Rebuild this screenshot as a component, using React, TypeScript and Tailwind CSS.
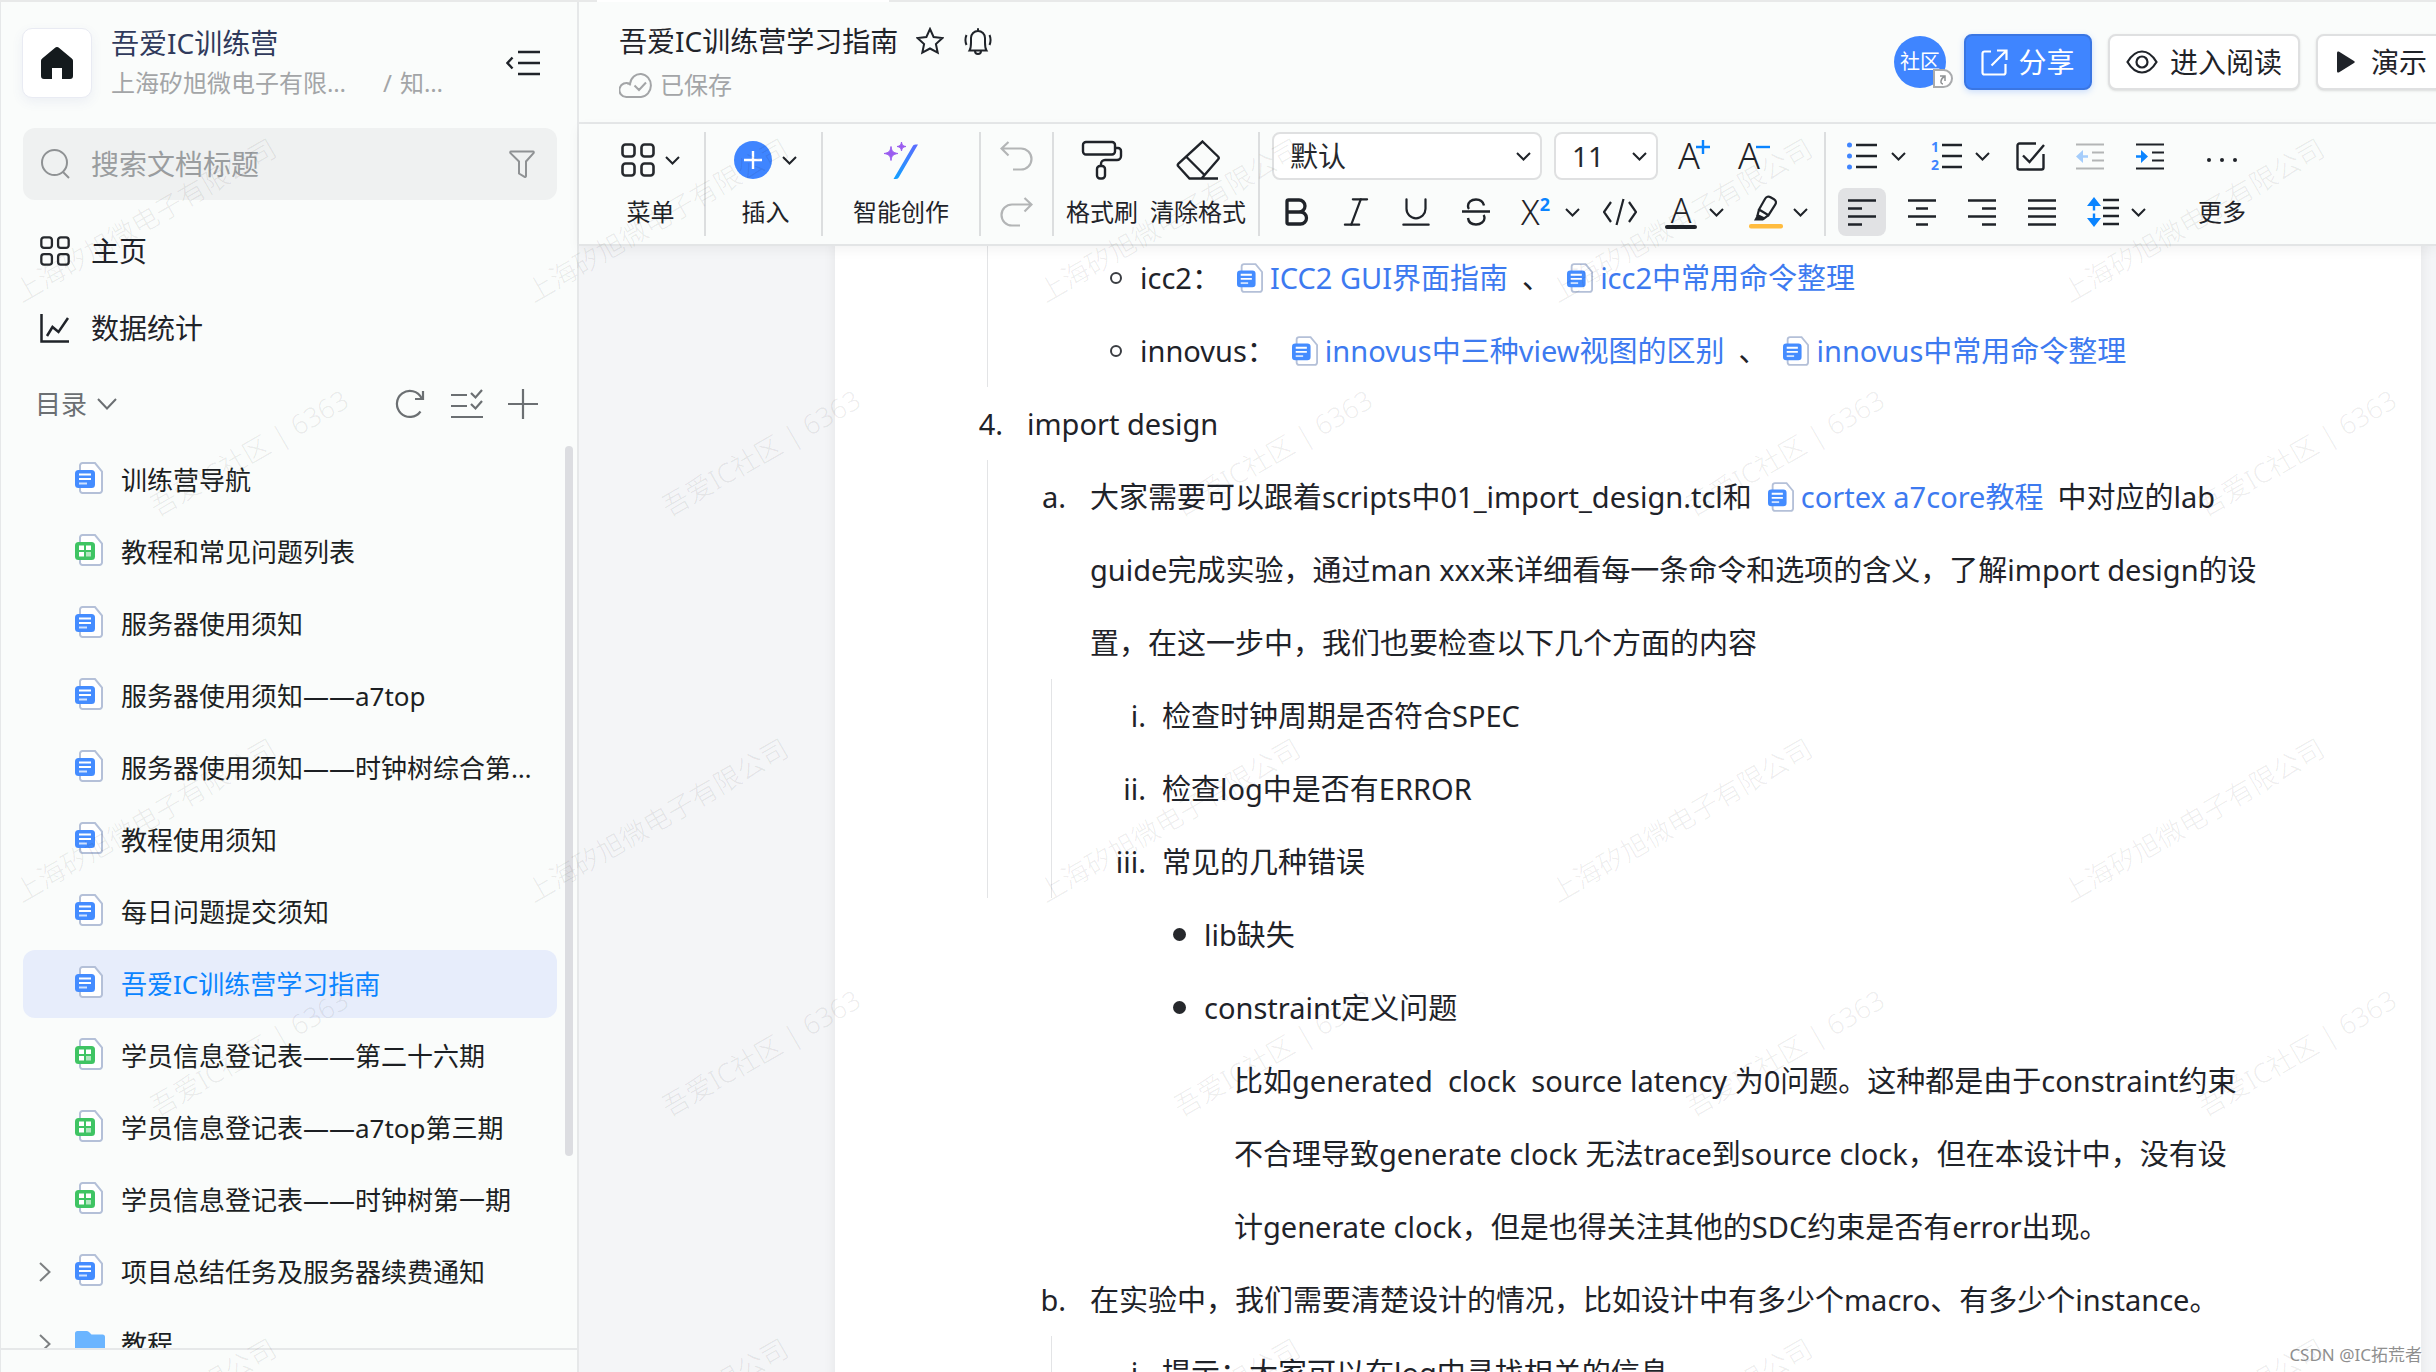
import type { ReactNode } from 'react';
import { Bold, Italic, Underline } from 'lucide-react';
import clsx from 'clsx';

type DocKind = 'doc' | 'sheet' | 'folder';

const tree: { title: string; kind: DocKind; active?: boolean; expandable?: boolean }[] = [
  { title: '训练营导航', kind: 'doc' },
  { title: '教程和常见问题列表', kind: 'sheet' },
  { title: '服务器使用须知', kind: 'doc' },
  { title: '服务器使用须知——a7top', kind: 'doc' },
  { title: '服务器使用须知——时钟树综合第二期', kind: 'doc' },
  { title: '教程使用须知', kind: 'doc' },
  { title: '每日问题提交须知', kind: 'doc' },
  { title: '吾爱IC训练营学习指南', kind: 'doc', active: true },
  { title: '学员信息登记表——第二十六期', kind: 'sheet' },
  { title: '学员信息登记表——a7top第三期', kind: 'sheet' },
  { title: '学员信息登记表——时钟树第一期', kind: 'sheet' },
  { title: '项目总结任务及服务器续费通知', kind: 'doc', expandable: true },
  { title: '教程', kind: 'folder', expandable: true },
];

export default function App() {
  return (
    <div
      lang="zh-CN"
      className="relative flex h-screen flex-col overflow-hidden bg-[#fafcfb] font-['Noto_Sans','Noto_Sans_CJK_SC',sans-serif] text-[#1f2329]"
    >
      <div className="h-0.5 flex-none bg-[#e8e9e9] pl-[597px]">
        <div className="h-full w-[292px] bg-white" />
      </div>
      <div className="flex min-h-0 flex-1">
        <Sidebar />
        <div className="flex min-w-0 flex-1 flex-col">
          <TopBar />
          <Toolbar />
          <Editor />
        </div>
      </div>
      <Watermark />
      <span className="absolute right-[14px] bottom-[5px] text-[17px] text-[#8f8f8f] [text-shadow:1px_1px_0_#fff]">
        CSDN @IC拓荒者
      </span>
    </div>
  );
}

function Sidebar() {
  return (
    <aside className="flex w-[579px] flex-none flex-col border-r-2 border-l border-[#e6e8e9]">
      <div className="flex items-center pt-[21px] pr-[37px] pl-[21px]">
        <button
          aria-label="首页"
          className="flex h-[70px] w-[70px] flex-none items-center justify-center rounded-[10px] border border-[#e9ebf3] bg-white shadow-[0_4px_12px_rgba(80,90,160,0.08)]"
        >
          <svg width="32" height="32" viewBox="0 0 32 32" fill="#141a1d">
            <path d="M14.4.6a2.6 2.6 0 0 1 3.2 0L30.800 11.500A3 3 0 0 1 32 14v15a3 3 0 0 1-3 3h-8V21H11v11H3a3 3 0 0 1-3-3V14a3 3 0 0 1 1.200-2.500z" />
          </svg>
        </button>
        <div className="ml-[19px] min-w-0 flex-1">
          <div className="text-[28px] leading-10 text-[#303a5c]">吾爱IC训练营</div>
          <div className="flex text-[24px] leading-10 text-[#a3a5a7]">
            <span className="w-[246px] truncate">上海矽旭微电子有限公司</span>
            <span className="ml-[26px]">/</span>
            <span className="ml-2 whitespace-nowrap">知…</span>
          </div>
        </div>
        <button aria-label="收起目录">
          <Svg w={34} h={26} s={2.4} className="text-[#1f2329]">
            <path d="M12 2h22M12 13h22M12 24h22M6.500 7.500 1.500 13l5 5.500" />
          </Svg>
        </button>
      </div>

      <label className="mr-5 ml-[22px] mt-[25px] flex h-[72px] flex-none items-center rounded-xl bg-[#eff1f1] pr-[22px] pl-[18px] text-[#8f9294]">
        <Svg w={30} h={30} s={2}>
          <circle cx="13.500" cy="13.500" r="12.500" />
          <path d="m22 23 6 6" />
        </Svg>
        <input
          type="text"
          aria-label="搜索文档标题"
          placeholder="搜索文档标题"
          className="ml-5 min-w-0 flex-1 bg-transparent text-[28px] outline-none placeholder:text-[#9a9d9f]"
        />
        <Svg w={26} h={28} s={2}>
          <path d="M2 1.500h22c.8 0 1 1 .5 1.600L17 11.500V26c0 .8-.8 1.200-1.400.8L10 23.500v-12L1.500 3.100C1 2.500 1.200 1.500 2 1.500z" />
        </Svg>
      </label>

      <nav className="mt-3 text-[28px]">
        <a href="#home" className="flex h-[77px] items-center pl-[39px]">
          <GridIcon size={30} />
          <span className="ml-[21px]">主页</span>
        </a>
        <a href="#stats" className="flex h-[77px] items-center pl-[39px]">
          <Svg w={30} h={30} s={2.5}>
            <path d="M1.500 1v27.500H29M7 23l5.500-9 6 5L28 5" />
          </Svg>
          <span className="ml-[21px]">数据统计</span>
        </a>
      </nav>

      <div className="mb-1 flex h-[76px] flex-none items-center pr-[39px] pl-[34px] text-[#6b6f72]">
        <button className="flex items-center gap-[10px] text-[26px]">
          目录
          <Svg w={20} h={12} s={2}>
            <path d="m1 1 9 9.500L19 1" />
          </Svg>
        </button>
        <button aria-label="刷新" className="ml-auto">
          <Svg w={30} h={30} s={2.2}>
            <path d="M25.500 22.500A13 13 0 1 1 26.500 9M28 2v8h-8" />
          </Svg>
        </button>
        <button aria-label="批量选择" className="ml-[26px]">
          <Svg w={32} h={30} s={2.2}>
            <path d="M0 6h16M0 17h16M0 28h32M20 4l4.500 4.500L31 1M20 15l4.500 4.500L31 12" />
          </Svg>
        </button>
        <button aria-label="新建" className="ml-[25px]">
          <Svg w={30} h={30} s={2.2}>
            <path d="M15 0v30M0 15h30" />
          </Svg>
        </button>
      </div>

      <div className="flex min-h-0 flex-1 justify-between border-b-2 border-[#e6e8e9] pr-1 pl-[22px]">
        <ul className="h-full w-[534px] overflow-hidden">
          {tree.map((item) => (
            <li key={item.title} className="mb-1">
              <a
                href="#doc"
                className={clsx(
                  'flex h-[68px] items-center rounded-xl pr-3 pl-4 text-[26px]',
                  item.active ? 'bg-[#e7edfb] text-[#0a84ff]' : 'text-[#1c1f23]',
                )}
              >
                <span className="w-9 flex-none text-[#7d8082]">
                  {item.expandable && (
                    <Svg w={12} h={20} s={2}>
                      <path d="m1 1 9.500 9L1 19" />
                    </Svg>
                  )}
                </span>
                {item.kind === 'folder' ? <FolderIcon /> : <DocIcon kind={item.kind} className="mb-1 h-8 w-7 flex-none" />}
                <span className="ml-[18px] truncate">{item.title}</span>
              </a>
            </li>
          ))}
        </ul>
        <div className="h-[710px] w-2 flex-none rounded-full bg-[#dcdde1]" />
      </div>
      <div className="h-[22px] flex-none" />
    </aside>
  );
}

function TopBar() {
  return (
    <header className="flex h-[122px] flex-none items-center overflow-hidden border-b-2 border-[#e6e8e9] pl-10 whitespace-nowrap">
      <div className="self-start pt-[17px]">
        <div className="flex items-center text-[28px] leading-[44px]">
          <h1>吾爱IC训练营学习指南</h1>
          <button aria-label="收藏" className="ml-[18px]">
            <Svg w={28} h={28} s={2}>
              <path d="m14 2 3.600 8 8.900 1-6.600 6 1.800 8.700L14 21.500l-7.700 4.200L8.100 17l-6.600-6 8.900-1z" />
            </Svg>
          </button>
          <button aria-label="订阅" className="ml-5">
            <Svg w={28} h={28} s={2}>
              <path d="M14 1.200v2M5.500 23.500c1.500-2.500 1.500-4 1.500-8V11a7 7 0 0 1 14 0v4.500c0 4 0 5.500 1.500 8zM11 24c0 4 6 4 6 0M2.500 8c-1.500 3.500-1.500 6.500 0 10M25.500 8c1.500 3.500 1.500 6.500 0 10" />
            </Svg>
          </button>
        </div>
        <div className="flex items-center gap-2 text-[24px] leading-[44px] text-[#a3a5a7]">
          <Svg w={33} h={26} s={2}>
            <path d="M7.500 25H22a10.500 11.500 0 1 0-11-13A7 7 0 1 0 7.500 25zM15.500 13.500l4.500 4.500 7-7.500M8 11.500c2 0 3 .5 3.500 1.500" />
          </Svg>
          已保存
        </div>
      </div>

      <div className="-mr-4 ml-auto flex items-center text-[28px]">
        <div className="relative mr-[18px] flex h-[52px] w-[52px] items-center justify-center rounded-full bg-[#3f85ff] text-[20px] text-white">
          社区
          <span className="absolute -right-[7px] bottom-0 flex h-[19px] w-[20px] items-center justify-center rounded-r-full border-2 border-[#a9abad] bg-white">
            <svg width="10" height="12" viewBox="0 0 10 12" fill="none" stroke="#8f9294" strokeWidth="1.5">
              <path d="M2 3h5v5M7 3C2 6 2 11 5 11" />
            </svg>
          </span>
        </div>
        <button className="flex h-14 w-32 items-center justify-center gap-[10px] rounded-lg border-2 border-[#3a76e3] bg-[#3f85ff] text-white shadow-[0_2px_6px_rgba(63,133,255,0.25)]">
          <Svg w={27} h={27} s={2.2}>
            <path d="M10 2.500H3.500a2 2 0 0 0-2 2v19a2 2 0 0 0 2 2h19a2 2 0 0 0 2-2V15M10.500 16.500 25.500 1.500M16 1.500h9.500V11" />
          </Svg>
          分享
        </button>
        <button className="ml-4 flex h-14 w-48 items-center justify-center gap-3 rounded-lg border-2 border-[#dfe0e1] bg-white shadow-sm">
          <Svg w={32} h={24} s={2.2}>
            <path d="M1.500 12C6 4.500 11 1.500 16 1.500S26 4.500 30.500 12C26 19.500 21 22.500 16 22.500S6 19.500 1.500 12z" />
            <circle cx="16" cy="12" r="5.500" />
          </Svg>
          进入阅读
        </button>
        <button className="ml-4 flex h-14 w-[136px] items-center gap-4 rounded-lg border-2 border-[#dfe0e1] bg-white pl-[19px] shadow-sm">
          <svg width="18" height="22" viewBox="0 0 18 22" fill="#1f2329">
            <path d="M0 2C0 .5 1 0 2.200.8L17 10c1 .6 1 1.400 0 2L2.200 21.200C1 22 0 21.500 0 20z" />
          </svg>
          演示
        </button>
      </div>
    </header>
  );
}

function Toolbar() {
  return (
    <div
      role="toolbar"
      className="relative z-10 flex h-[122px] flex-none items-center overflow-hidden border-b-2 border-[#e3e5e6] bg-[#fafcfb] text-[24px] leading-8 whitespace-nowrap shadow-[0_4px_12px_rgba(0,0,0,0.05)]"
    >
      <BigButton className="ml-[42px]" label="菜单">
        <GridIcon size={34} />
        <Chevron />
      </BigButton>
      <Divider className="ml-6" />
      <BigButton className="ml-7" label="插入">
        <svg width="38" height="38" viewBox="0 0 38 38">
          <circle cx="19" cy="19" r="19" fill="#3f85ff" />
          <path d="M19 10v18M10 19h18" stroke="#fff" strokeWidth="2.400" />
        </svg>
        <Chevron />
      </BigButton>
      <Divider className="ml-6" />
      <BigButton className="ml-[30px]" label="智能创作">
        <svg width="34" height="38" viewBox="0 0 34 38">
          <defs>
            <linearGradient id="wand" x1="0" y1="0" x2="0" y2="1">
              <stop offset="0" stopColor="#5b6cff" />
              <stop offset="1" stopColor="#12a0ff" />
            </linearGradient>
          </defs>
          <path d="M28.500 5.500c.5-1.200 1.500-2 3-2H34L15 36c-.6 1.200-1.500 2-3 2h-2.500z" fill="url(#wand)" />
          <path d="M7 5.500c.8 5 2 6.200 7 7-5 .8-6.200 2-7 7-.8-5-2-6.200-7-7 5-.8 6.200-2 7-7z" fill="#9a5cf0" stroke="#9a5cf0" />
          <path d="M17.500 1c.5 3.300 1.300 4.100 4.500 4.500-3.200.5-4 1.300-4.500 4.500-.5-3.200-1.300-4-4.500-4.500 3.200-.4 4-1.200 4.500-4.500z" fill="#9a5cf0" stroke="#9a5cf0" />
        </svg>
      </BigButton>
      <Divider className="ml-[30px]" />
      <div className="mx-[19px] flex flex-col gap-[26px] text-[#b3b5b6]">
        <button aria-label="撤销">
          <Svg w={33} h={30} s={2.2}>
            <path d="M8.500 1 1.500 7.500l7 7M1.500 7.500H21a10.500 10.500 0 0 1 0 21h-8" />
          </Svg>
        </button>
        <button aria-label="重做">
          <Svg w={33} h={30} s={2.2}>
            <path d="m24.500 1 7 6.500-7 7M31.500 7.500H12a10.500 10.500 0 0 0 0 21h8" />
          </Svg>
        </button>
      </div>
      <Divider />
      <BigButton className="ml-3" label="格式刷">
        <Svg w={42} h={40} s={2.4}>
          <rect x="2" y="2" width="32" height="12.500" rx="3" />
          <path d="M34 8h3a3 3 0 0 1 3 3v5a4 4 0 0 1-4 4H24a4 4 0 0 0-4 4v2" />
          <rect x="16" y="26" width="8" height="12.500" rx="3" />
        </Svg>
      </BigButton>
      <BigButton className="ml-3" label="清除格式">
        <Svg w={44} h={40} s={2.4}>
          <path d="M26.500 1.500 42 16.500c1 1 1 2 0 3L25.500 38.500H13.500l-11-12c-1-1-1-2 0-3zM10.500 17 28 34.500M14 38.500h28" />
        </Svg>
      </BigButton>
      <Divider className="ml-3" />

      <div className="ml-3 flex flex-col gap-2">
        <div className="flex gap-3">
          <Select label="字体" value="默认" className="w-[270px]" />
          <Select label="字号" value="11" className="w-[104px]" />
          <Tool label="增大字号">
            <span className="text-[36px] leading-10 font-light">A</span>
            <Svg w={14} h={14} s={2.4} className="mt-2 -ml-1 self-start text-[#0a84ff]">
              <path d="M7 0v14M0 7h14" />
            </Svg>
          </Tool>
          <Tool label="减小字号">
            <span className="text-[36px] leading-10 font-light">A</span>
            <Svg w={14} h={14} s={2.4} className="mt-2 -ml-1 self-start text-[#0a84ff]">
              <path d="M0 7h14" />
            </Svg>
          </Tool>
        </div>
        <div className="flex gap-3">
          <Tool label="加粗"><Bold size={36} strokeWidth={2.2} /></Tool>
          <Tool label="斜体"><Italic size={38} strokeWidth={1.4} /></Tool>
          <Tool label="下划线"><Underline size={38} strokeWidth={1.4} /></Tool>
          <Tool label="删除线">
            <Svg w={28} h={28} s={2.4}>
              <path d="M0 13.500h28M22 7.500C21 3.500 18 1.500 14 1.500c-5 0-8 3-8 6.500 0 1.200.4 2.300 1 3M6 20c.5 4 3.500 6.500 8 6.500 5 0 8.500-3 8.500-6.500 0-1.200-.3-2.200-1-3" />
            </Svg>
          </Tool>
          <Tool label="上标" wide>
            <span className="flex items-center">
              <span className="text-[34px] leading-10 font-light">X</span>
              <span className="self-start pt-1 text-[18px] leading-4 font-bold text-[#0a84ff]">2</span>
            </span>
            <Chevron />
          </Tool>
          <Tool label="代码">
            <Svg w={34} h={28} s={2.2}>
              <path d="m8 4-7 10 7 10M26 4l7 10-7 10M20.500 1l-7 26" />
            </Svg>
          </Tool>
          <Tool label="文字颜色" wide>
            <span className="flex w-8 flex-col items-center">
              <span className="text-[34px] leading-[30px] font-light">A</span>
              <span className="h-1 w-8 rounded-full bg-[#1f2329]" />
            </span>
            <Chevron />
          </Tool>
          <Tool label="高亮" wide>
            <svg width="34" height="34" viewBox="0 0 34 34" fill="none" stroke="#1f2329" strokeWidth="2.200">
              <path d="m10 14.500 6-10.500c1.300-2.300 3.500-3 5.500-1.800l3.500 2c2.200 1.300 2.500 3.500 1.200 5.500l-6.700 10.500zM10 14.500l-1.500 6 6 3.500 5-3.800" />
              <path d="M8.500 19 5 25.500h9l2-3z" fill="#1f2329" stroke="none" />
              <rect y="29" width="34" height="4.500" rx="2" fill="#ffbc3f" stroke="none" />
            </svg>
            <Chevron />
          </Tool>
        </div>
      </div>
      <Divider className="ml-3" />

      <div className="ml-3 flex flex-col gap-2">
        <div className="flex gap-3">
          <Tool label="无序列表" wide>
            <svg width="30" height="28" viewBox="0 0 30 28">
              <path d="M9 3h21M9 14h21M9 25h21" stroke="#1f2329" strokeWidth="2.400" />
              <path d="M0 3a2.500 2.500 0 1 1 5 0 2.500 2.500 0 1 1-5 0M0 14a2.500 2.500 0 1 1 5 0 2.500 2.500 0 1 1-5 0M0 25a2.500 2.500 0 1 1 5 0 2.500 2.500 0 1 1-5 0" fill="#3f85ff" />
            </svg>
            <Chevron />
          </Tool>
          <Tool label="有序列表" wide>
            <span className="flex items-center gap-[3px]">
              <span className="flex flex-col gap-1 text-[14px] leading-[14px] font-bold text-[#3f85ff]">
                <span>1</span>
                <span>2</span>
              </span>
              <Svg w={20} h={28} s={2.4}>
                <path d="M0 3h20M0 14h20M0 25h20" />
              </Svg>
            </span>
            <Chevron />
          </Tool>
          <Tool label="任务列表">
            <Svg w={29} h={29} s={2.4}>
              <path d="M20 1.500H3.500a2 2 0 0 0-2 2v22a2 2 0 0 0 2 2h22a2 2 0 0 0 2-2V12M7 13.500l6.500 6.500L28 3" />
            </Svg>
          </Tool>
          <Tool label="减少缩进"><IndentIcon className="text-[#b3b5b6]" arrow="M0 13.500 7 7v5.300h5v2.400H7V20z" arrowColor="#a5cdfb" /></Tool>
          <Tool label="增加缩进"><IndentIcon arrow="M12 13.500 5 7v5.300H0v2.400h5V20z" arrowColor="#0a84ff" /></Tool>
        </div>
        <div className="flex gap-3">
          <Tool label="左对齐" active><AlignIcon d="M0 1.500h28M0 9.500h14M0 17.500h28M0 25.500h14" /></Tool>
          <Tool label="居中"><AlignIcon d="M0 1.500h28M8 9.500h12M0 17.500h28M8 25.500h12" /></Tool>
          <Tool label="右对齐"><AlignIcon d="M0 1.500h28M14 9.500h14M0 17.500h28M14 25.500h14" /></Tool>
          <Tool label="两端对齐"><AlignIcon d="M0 1.500h28M0 9.500h28M0 17.500h28M0 25.500h28" /></Tool>
          <Tool label="行高" wide>
            <svg width="32" height="32" viewBox="0 0 32 32">
              <path d="M16 4h16M16 12h16M16 20h16M16 28h16" stroke="#1f2329" strokeWidth="2.400" />
              <path d="m7 1 7 9H8.200v4.500H5.800V10H0zM7 31l7-9H8.200v-4.500H5.800V22H0z" fill="#0a84ff" />
            </svg>
            <Chevron />
          </Tool>
        </div>
      </div>
      <BigButton className="ml-6" label="更多">
        <svg width="30" height="4" viewBox="0 0 30 4" fill="#1f2329">
          <circle cx="2" cy="2" r="2" />
          <circle cx="15" cy="2" r="2" />
          <circle cx="28" cy="2" r="2" />
        </svg>
      </BigButton>
    </div>
  );
}

function Editor() {
  return (
    <main className="min-h-0 flex-1 overflow-hidden bg-[#f4f5f7] pr-[15px] pl-64">
      <article className="-mt-[5px] h-[1200px] bg-white pl-[152px] text-[29px] leading-[73px] whitespace-pre shadow-[0_0_12px_rgba(0,0,0,0.07)]">
        <div className="border-l border-[#e3e4e6]">
          <Row marker={<span className="h-3 w-3 rounded-full border-2 border-[#3a3d42]" />} markerClass="w-[152px] pr-[18px]">
            icc2：<DocLink>ICC2 GUI界面指南</DocLink>、<DocLink>icc2中常用命令整理</DocLink>
          </Row>
          <Row marker={<span className="h-3 w-3 rounded-full border-2 border-[#3a3d42]" />} markerClass="w-[152px] pr-[18px]">
            innovus：<DocLink>innovus中三种view视图的区别</DocLink>、<DocLink>innovus中常用命令整理</DocLink>
          </Row>
        </div>
        <Row marker="4." markerClass="w-[40px] pr-6">import design</Row>
        <div className="border-l border-[#e3e4e6]">
          <Row marker="a." markerClass="w-[102px] pr-6">
            大家需要可以跟着scripts中01_import_design.tcl和<DocLink>cortex a7core教程</DocLink>中对应的lab
            <br />
            guide完成实验，通过man xxx来详细看每一条命令和选项的含义，了解import design的设
            <br />
            置，在这一步中，我们也要检查以下几个方面的内容
          </Row>
          <div className="ml-[63px] border-l border-[#e3e4e6]">
            <Row marker="i." markerClass="w-[110px] pr-4">检查时钟周期是否符合SPEC</Row>
            <Row marker="ii." markerClass="w-[110px] pr-4">检查log中是否有ERROR</Row>
            <Row marker="iii." markerClass="w-[110px] pr-4">常见的几种错误</Row>
          </div>
        </div>
        <Row marker={<span className="h-[13px] w-[13px] rounded-full bg-[#26282c]" />} markerClass="w-[217px] pr-[18px]">lib缺失</Row>
        <Row marker={<span className="h-[13px] w-[13px] rounded-full bg-[#26282c]" />} markerClass="w-[217px] pr-[18px]">constraint定义问题</Row>
        <p className="ml-[247px]">
          比如generated{'  '}clock{'  '}source latency 为0问题。这种都是由于constraint约束
          <br />
          不合理导致generate clock 无法trace到source clock，但在本设计中，没有设
          <br />
          计generate clock，但是也得关注其他的SDC约束是否有error出现。
        </p>
        <Row marker="b." markerClass="w-[103px] pr-6">
          在实验中，我们需要清楚设计的情况，比如设计中有多少个macro、有多少个instance。
        </Row>
        <div className="ml-[64px] border-l border-[#e3e4e6]">
          <Row marker="i." markerClass="w-[110px] pr-4">提示：大家可以在log中寻找相关的信息</Row>
        </div>
      </article>
    </main>
  );
}

function Row({ marker, markerClass, children }: { marker: ReactNode; markerClass: string; children: ReactNode }) {
  return (
    <div className="flex">
      <div className={clsx('flex h-[73px] flex-none items-center justify-end', markerClass)}>{marker}</div>
      <p>{children}</p>
    </div>
  );
}

function DocLink({ children }: { children: ReactNode }) {
  return (
    <a href="#doc" className="mr-[14px] ml-4 text-[#3d7af0]">
      <DocIcon kind="doc" className="mr-[7px] inline-block h-[30px] w-[26px] align-[-4px]" />
      {children}
    </a>
  );
}

function Tool({ label, wide, active, children }: { label: string; wide?: boolean; active?: boolean; children: ReactNode }) {
  return (
    <button
      aria-label={label}
      className={clsx(
        'flex h-12 flex-none items-center rounded-lg',
        wide ? 'w-[72px] justify-between pr-1 pl-[9px]' : 'w-12 justify-center',
        active && 'bg-[#e1e2e4]',
      )}
    >
      {children}
    </button>
  );
}

function BigButton({ label, className, children }: { label: string; className: string; children: ReactNode }) {
  return (
    <button className={clsx('flex flex-none flex-col items-center', className)}>
      <span className="flex h-14 items-center gap-[10px]">{children}</span>
      <span className="flex h-12 items-center">{label}</span>
    </button>
  );
}

function Select({ label, value, className }: { label: string; value: string; className: string }) {
  return (
    <span className={clsx('relative flex-none', className)}>
      <select
        aria-label={label}
        className="h-12 w-full appearance-none rounded-lg border-2 border-[#dfe0e1] bg-white pl-4 text-[28px] leading-10 text-[#26282c]"
      >
        <option>{value}</option>
      </select>
      <span className="pointer-events-none absolute top-0 right-[11px] flex h-12 items-center">
        <Chevron />
      </span>
    </span>
  );
}

function Divider({ className }: { className?: string }) {
  return <div className={clsx('h-[104px] w-0.5 flex-none bg-[#dcdedf]', className)} />;
}

function Svg({ w, h, s, className, children }: { w: number; h: number; s: number; className?: string; children: ReactNode }) {
  return (
    <svg
      width={w}
      height={h}
      viewBox={`0 0 ${w} ${h}`}
      fill="none"
      stroke="currentColor"
      strokeWidth={s}
      className={clsx('flex-none', className)}
    >
      {children}
    </svg>
  );
}

function Chevron() {
  return (
    <Svg w={15} h={9} s={2}>
      <path d="m1 1 6.500 6.500L14 1" />
    </Svg>
  );
}

function GridIcon({ size }: { size: number }) {
  return (
    <svg width={size} height={size} viewBox="0 0 34 34" fill="none" stroke="#26292d" strokeWidth="2.600" className="flex-none">
      <rect x="1.500" y="1.500" width="12" height="12" rx="3" />
      <rect x="20.500" y="1.500" width="12" height="12" rx="3" />
      <rect x="1.500" y="20.500" width="12" height="12" rx="3" />
      <rect x="20.500" y="20.500" width="12" height="12" rx="3" />
    </svg>
  );
}

function AlignIcon({ d }: { d: string }) {
  return (
    <Svg w={28} h={27} s={2.4}>
      <path d={d} />
    </Svg>
  );
}

function IndentIcon({ arrow, arrowColor, className }: { arrow: string; arrowColor: string; className?: string }) {
  return (
    <Svg w={28} h={27} s={2.2} className={className}>
      <path d="M0 1.500h28M16 9.500h12M16 17.500h12M0 25.500h28" />
      <path d={arrow} fill={arrowColor} stroke="none" />
    </Svg>
  );
}

function DocIcon({ kind, className }: { kind: DocKind; className: string }) {
  return (
    <svg viewBox="0 0 28 32" className={className}>
      <path d="M7.500 1H20l7 8.500v19a2.500 2.500 0 0 1-2.500 2.500h-17A2.500 2.500 0 0 1 5 28.500v-25A2.500 2.500 0 0 1 7.500 1z" fill="#fff" stroke="#b4c0d8" strokeWidth="2" />
      <rect y="8" width="20" height="18" rx="3.500" fill={kind === 'doc' ? '#448cff' : '#3fc463'} />
      {kind === 'doc' ? (
        <>
          <path d="M4 12.500h12M4 17h12" stroke="#fff" strokeWidth="2" />
          <path d="M4 21.500h8" stroke="#fff" strokeOpacity=".75" strokeWidth="2" />
        </>
      ) : (
        <>
          <path d="M4 11.500h5v4.500H4zM11 11.500h5v4.500h-5zM4 18h5v4.500H4z" fill="#fff" />
          <path d="M11 18h5v4.500h-5z" fill="#fff" fillOpacity=".6" />
        </>
      )}
    </svg>
  );
}

function FolderIcon() {
  return (
    <svg width="30" height="26" viewBox="0 0 30 26" fill="#6bb5ff" className="-mr-0.5 flex-none">
      <path d="M0 2.500A2.500 2.500 0 0 1 2.500 0h9c1 0 1.800.4 2.500 1l2.500 2.500h11A2.500 2.500 0 0 1 30 6v17.500a2.500 2.500 0 0 1-2.500 2.500h-25A2.500 2.500 0 0 1 0 23.500z" />
    </svg>
  );
}

// Repeated company / member mark laid over the whole window
function Watermark() {
  return (
    <div aria-hidden="true" className="pointer-events-none absolute inset-0 z-20 overflow-hidden">
      <div className="grid w-[2560px] auto-rows-[600px] grid-cols-5 text-[27px] leading-8 font-light whitespace-nowrap text-black/8">
        {Array.from({ length: 15 }, (_, i) => (
          <div key={i} className="relative">
            <span className="absolute top-[204px] -left-[5px] w-[300px] -rotate-30 text-center">上海矽旭微电子有限公司</span>
            <span className="absolute top-[437px] left-[99px] w-[300px] -rotate-30 text-center">吾爱IC社区 | 6363</span>
          </div>
        ))}
      </div>
    </div>
  );
}
